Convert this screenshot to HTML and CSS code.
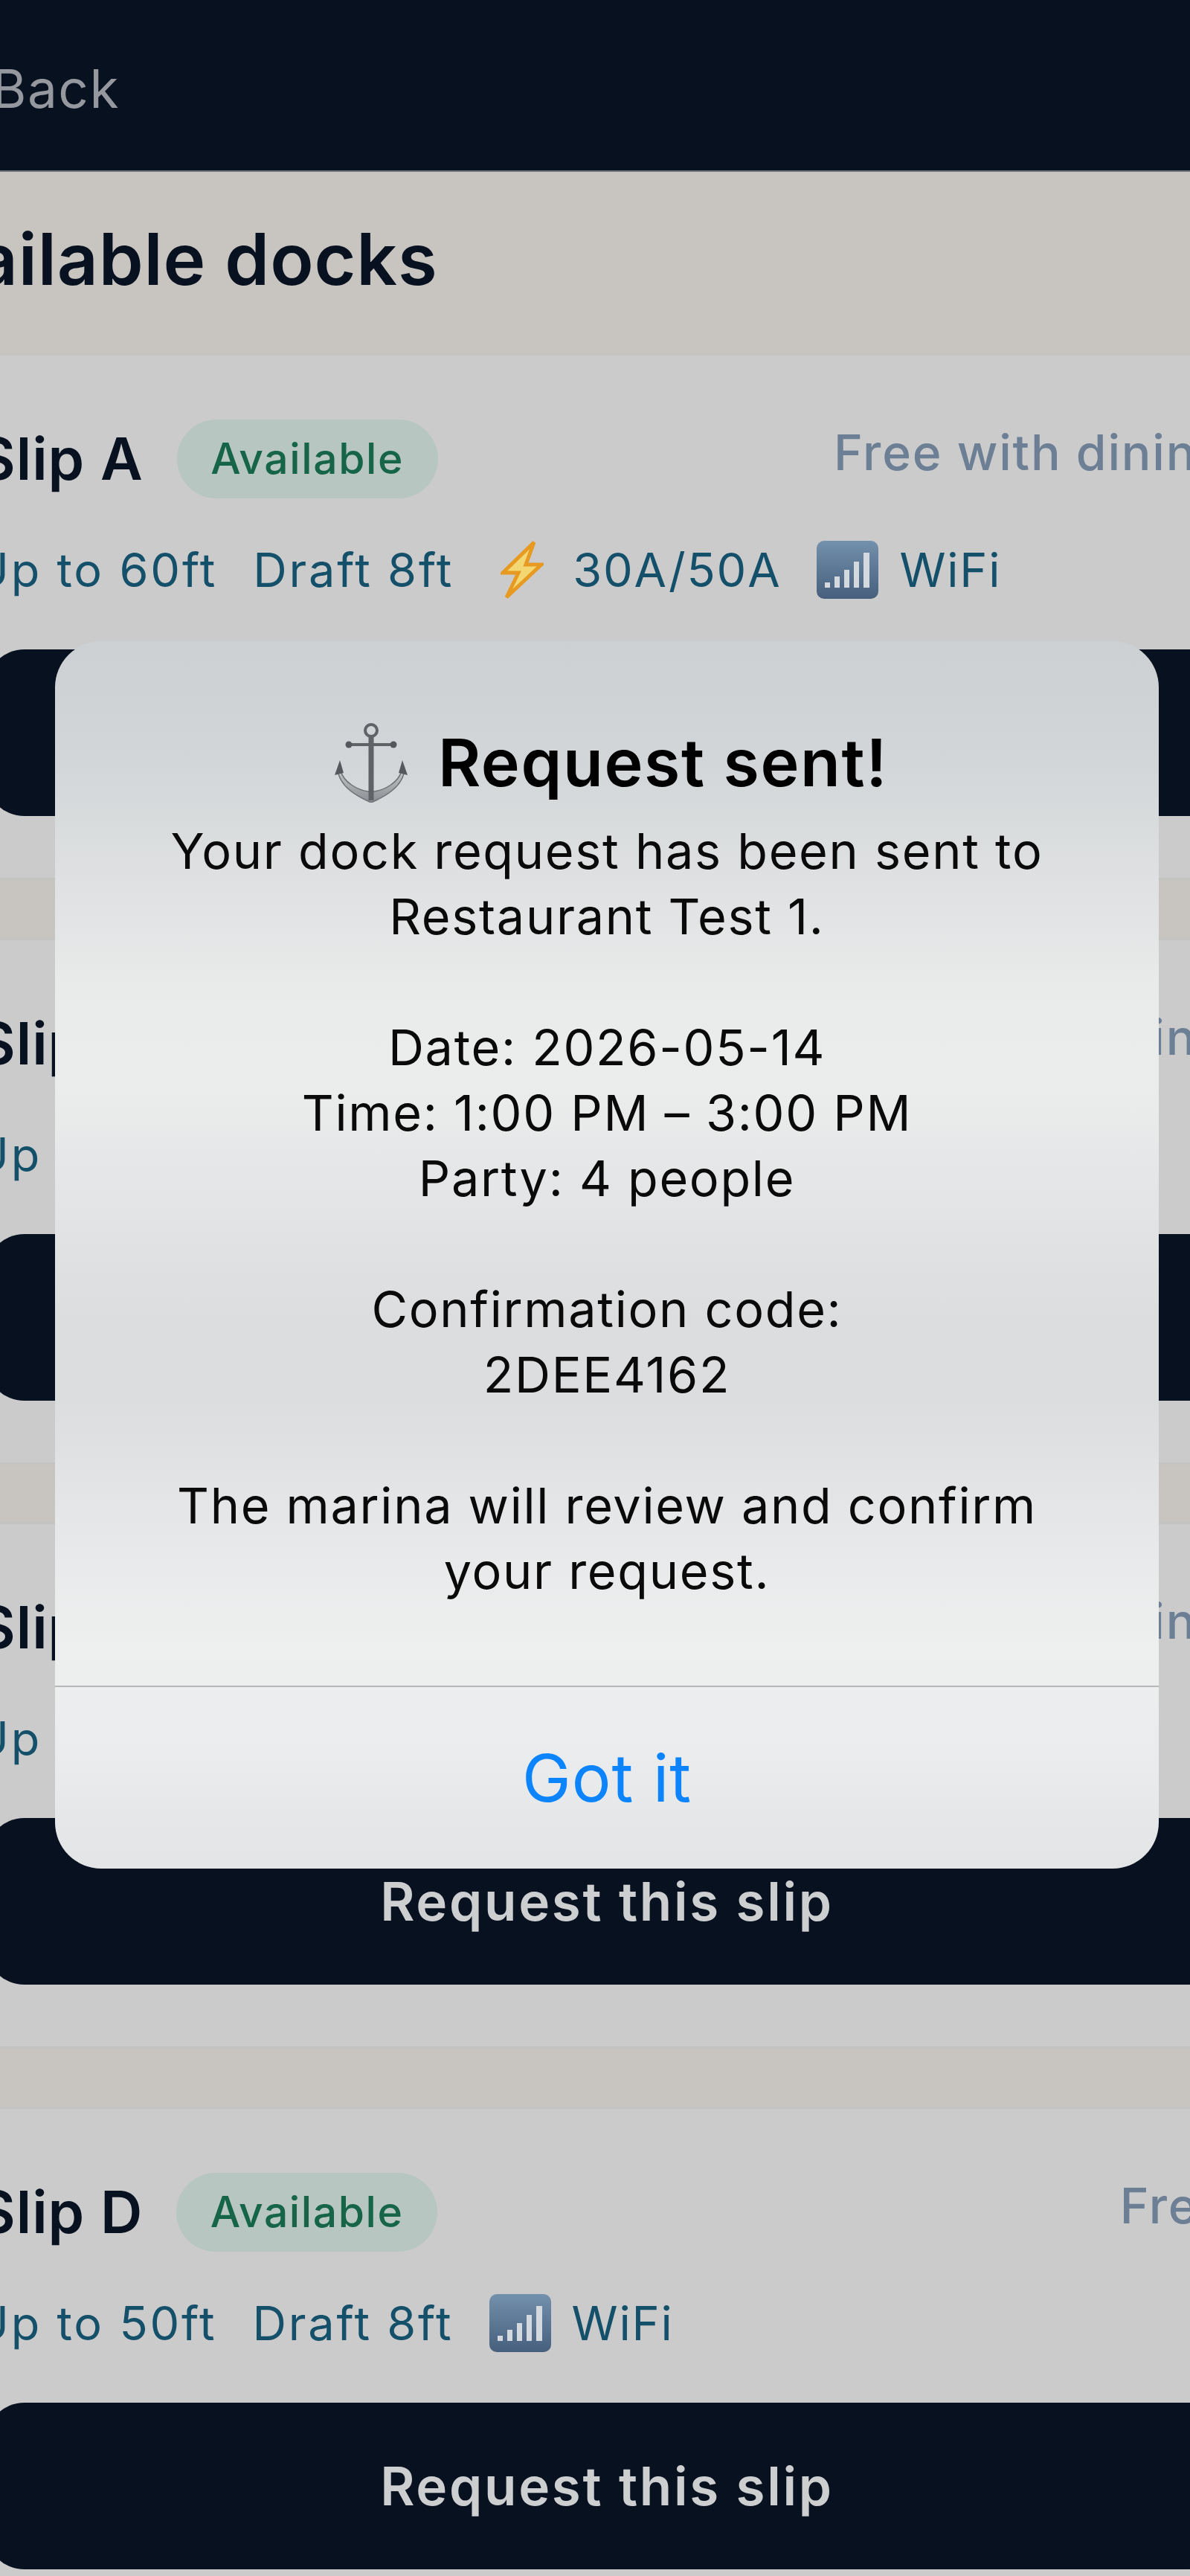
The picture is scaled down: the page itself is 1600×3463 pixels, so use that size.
FILE: index.html
```html
<!DOCTYPE html>
<html lang="en">
<head>
<meta charset="utf-8">
<title>Available docks</title>
<link rel="stylesheet" href="styles.css">
</head>
<body>
<svg class="defs" width="0" height="0" aria-hidden="true">
  <defs>
    <linearGradient id="signal-bg" x1="0" y1="0" x2="0" y2="1">
      <stop offset="0" stop-color="#7390ac"/>
      <stop offset="1" stop-color="#465f7d"/>
    </linearGradient>
    <linearGradient id="anchor-metal" x1="0" y1="0" x2="0" y2="1">
      <stop offset="0" stop-color="#c6c8ca"/>
      <stop offset="1" stop-color="#8a8d91"/>
    </linearGradient>
    <symbol id="signal" viewBox="0 0 83 78">
      <rect width="83" height="78" rx="10" fill="url(#signal-bg)"/>
      <g fill="#d3d9de">
        <rect x="11" y="56" width="7" height="7"/>
        <rect x="24" y="48" width="7" height="15"/>
        <rect x="37" y="39" width="7" height="24"/>
        <rect x="50" y="28" width="7" height="35"/>
        <rect x="63" y="16" width="8" height="47"/>
      </g>
    </symbol>
    <symbol id="bolt" viewBox="0 0 58 80">
      <path d="M45 3 3 44H24L8 77 55 33H34Z" fill="#f2d772" stroke="#e69a22" stroke-width="5" stroke-linejoin="miter"/>
    </symbol>
  </defs>
</svg>
<div class="page">
  <header class="topbar"><span class="back">Back</span></header>
  <h1 class="section-title">Available docks</h1>

  <section class="slip">
    <div class="slip-head">
      <div class="slip-name"><h2>Slip A</h2><span class="badge">Available</span></div>
      <span class="price">Free with dining</span>
    </div>
    <div class="meta">
      <span>Up to 60ft</span><span>Draft 8ft</span>
      <span class="feature"><svg class="bolt"><use href="#bolt"/></svg>30A/50A</span>
      <span class="feature"><svg class="signal"><use href="#signal"/></svg>WiFi</span>
    </div>
    <button class="request">Request this slip</button>
  </section>

  <section class="slip">
    <div class="slip-head">
      <div class="slip-name"><h2>Slip B</h2><span class="badge">Available</span></div>
      <span class="price">Free with dining</span>
    </div>
    <div class="meta">
      <span>Up to 60ft</span><span>Draft 8ft</span>
      <span class="feature"><svg class="signal"><use href="#signal"/></svg>WiFi</span>
    </div>
    <button class="request">Request this slip</button>
  </section>

  <section class="slip">
    <div class="slip-head">
      <div class="slip-name"><h2>Slip C</h2><span class="badge">Available</span></div>
      <span class="price">Free with dining</span>
    </div>
    <div class="meta">
      <span>Up to 60ft</span><span>Draft 8ft</span>
      <span class="feature"><svg class="signal"><use href="#signal"/></svg>WiFi</span>
    </div>
    <button class="request">Request this slip</button>
  </section>

  <section class="slip">
    <div class="slip-head">
      <div class="slip-name"><h2>Slip D</h2><span class="badge">Available</span></div>
      <span class="price">Free</span>
    </div>
    <div class="meta">
      <span>Up to 50ft</span><span>Draft 8ft</span>
      <span class="feature"><svg class="signal"><use href="#signal"/></svg>WiFi</span>
    </div>
    <button class="request">Request this slip</button>
  </section>

  <div class="modal-layer">
    <div class="alert" role="alertdialog">
      <div class="alert-body">
        <h3 class="alert-title">
          <svg class="anchor" viewBox="0 0 104 107" aria-hidden="true">
            <path d="M7 62C9 86 34 99 52 107 70 99 95 86 97 62L93 64C89 80 70 90 56 92H48C34 90 15 80 11 64Z" fill="url(#anchor-metal)" stroke="#6d7074" stroke-width="1.5"/>
            <g fill="none" stroke="#5f6368">
              <circle cx="52" cy="10" r="8" stroke-width="4"/>
              <path d="M52 18V104" stroke-width="7"/>
              <path d="M22 29H82" stroke-width="4"/>
            </g>
            <g fill="#55595e">
              <circle cx="22" cy="29" r="4.5"/>
              <circle cx="82" cy="29" r="4.5"/>
              <path d="M10 50 3 70 15 67Z"/>
              <path d="M94 50 101 70 89 67Z"/>
            </g>
          </svg>
          <span>Request sent!</span>
        </h3>
        <p class="alert-text">Your dock request has been sent to<br>Restaurant Test 1.<br><br>Date: 2026-05-14<br>Time: 1:00 PM – 3:00 PM<br>Party: 4 people<br><br>Confirmation code:<br>2DEE4162<br><br>The marina will review and confirm<br>your request.</p>
      </div>
      <div class="alert-action">Got it</div>
    </div>
  </div>
</div>
</body>
</html>
```

FILE: styles.css
```css
* { box-sizing: border-box; }
html, body { margin: 0; padding: 0; }
body {
  width: 1600px;
  height: 3463px;
  overflow: hidden;
  background: #c8c5c1;
  font-family: Inter, "Liberation Sans", sans-serif;
}
.defs { position: absolute; }
.page {
  position: relative;
  width: 1816px;
  height: 3463px;
  margin-left: -92px;
  filter: blur(0.7px);
}
.topbar {
  height: 231px;
  background: #07111f;
  border-bottom: 2px solid #70747a;
  padding: 76px 0 0 81px;
}
.back {
  display: block;
  font-size: 71px;
  line-height: 86px;
  letter-spacing: 1.5px;
  color: #95999f;
}
.section-title {
  margin: 0;
  height: 244px;
  padding: 67px 0 0 72px;
  font-size: 96px;
  line-height: 100px;
  font-weight: 600;
  color: #07111f;
  letter-spacing: 0.9px;
  text-indent: -132px;
}
.slip {
  height: 708px;
  margin-bottom: 77.5px;
  padding: 86px 72px 0;
  background: #cbcbcb;
  border-top: 3px solid #c3c3c2;
  border-bottom: 3px solid #c3c3c2;
}
.slip-head {
  display: flex;
  justify-content: space-between;
  align-items: flex-start;
  height: 106px;
  margin-left: -10px;
}
.slip-name {
  display: flex;
  align-items: center;
  gap: 45px;
}
.slip-name h2 {
  margin: 0;
  font-size: 78px;
  line-height: 106px;
  font-weight: 600;
  letter-spacing: 1px;
  color: #07111f;
}
.badge {
  width: 351px;
  height: 106px;
  border-radius: 53px;
  background: #b7c6c1;
  color: #166548;
  font-size: 57px;
  line-height: 106px;
  font-weight: 500;
  letter-spacing: 1.6px;
  text-align: center;
}
.price {
  font-size: 66px;
  line-height: 88px;
  font-weight: 500;
  letter-spacing: 1.8px;
  color: #6c7f95;
}
.meta {
  display: flex;
  align-items: center;
  gap: 48px;
  height: 78px;
  margin: 57px 0 0 -15px;
  font-size: 63px;
  line-height: 78px;
  font-weight: 400;
  letter-spacing: 2.8px;
  color: #15506b;
}
.feature {
  display: flex;
  align-items: center;
  gap: 28px;
  letter-spacing: 1.8px;
}
.bolt {
  width: 58px;
  height: 80px;
  margin: 0 11px 0 15px;
}
.signal {
  width: 83px;
  height: 78px;
}
.request {
  display: block;
  width: 100%;
  height: 224px;
  margin: 68px 0 0;
  border: 0;
  border-radius: 53px;
  background: #07111f;
  color: #cdcecf;
  font: 600 71px/224px Inter, "Liberation Sans", sans-serif;
  letter-spacing: 2.7px;
  padding: 0;
}
.modal-layer {
  position: absolute;
  inset: 0;
  display: flex;
  justify-content: center;
  padding-top: 862px;
}
.alert {
  width: 1484px;
  height: 1650px;
  border-radius: 62px;
  overflow: hidden;
  background: linear-gradient(180deg, #cdd0d3 0%, #d3d6d8 10%, #dfe1e2 20%, #e9eaea 28%, #ebeded 36%, #e4e5e6 45%, #dcdddf 55%, #dcdddf 62%, #e6e7e8 72%, #eeefef 82%, #ebeced 90%, #e3e4e6 100%);
  display: flex;
  flex-direction: column;
}
.alert-body {
  height: 1406px;
  padding-top: 108px;
  border-bottom: 2px solid #b6b7b9;
  text-align: center;
  color: #0a0a0a;
}
.alert-title {
  display: flex;
  align-items: center;
  justify-content: center;
  gap: 38px;
  height: 110px;
  margin: 0 0 20px;
  padding-left: 9px;
  font-size: 88px;
  line-height: 110px;
  font-weight: 600;
  letter-spacing: 1.6px;
  color: #000;
}
.anchor {
  width: 104px;
  height: 107px;
}
.alert-text {
  margin: 0;
  font-size: 66.5px;
  line-height: 88px;
  font-weight: 400;
  letter-spacing: 1.7px;
}
.alert-action {
  flex: 1;
  display: flex;
  align-items: center;
  justify-content: center;
  font-size: 88px;
  letter-spacing: 1px;
  color: #0b84fe;
}
```
